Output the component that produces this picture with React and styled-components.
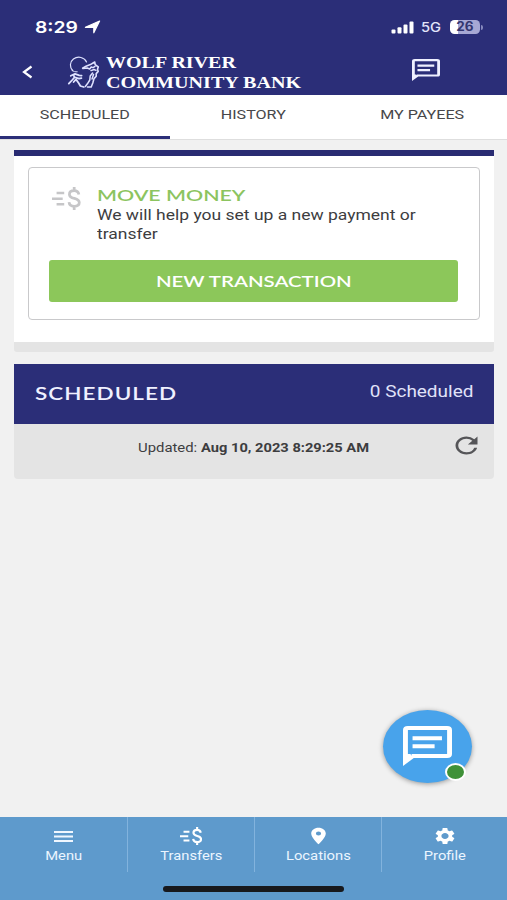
import React from 'react';
import styled, { createGlobalStyle } from 'styled-components';
import { MdLocationOn, MdRefresh, MdSettings } from 'react-icons/md';

const GlobalStyle = createGlobalStyle`
  *, *::before, *::after { box-sizing: border-box; }
  body { margin: 0; background: #f1f1f1; }
  svg { display: block; flex: none; }
`;

const Screen = styled.div`
  display: flex;
  flex-direction: column;
  height: 900px;
  overflow: hidden;
  background: #f1f1f1;
  color: #3d3d3f;
  font-family: Roboto, sans-serif;
`;

/* Text set in extended proportions. */
const Wide = styled.span`
  display: inline-block;
  white-space: nowrap;
  transform: scaleX(${(p) => p.$x});
  transform-origin: ${(p) => p.$from || 'center'};
`;

const SizedIcon = styled.span`
  svg {
    width: ${(p) => p.$w}px;
    height: ${(p) => p.$h}px;
  }
`;

const Header = styled.header`
  height: 95px;
  flex: none;
  background: #2b2e78;
  color: #fff;
`;

const StatusBar = styled.div`
  display: flex;
  align-items: center;
  justify-content: space-between;
  height: 54px;
  padding: 0 24px 0 35px;
`;

const StatusGroup = styled.div`
  display: flex;
  align-items: center;
`;

const Clock = styled.div`
  width: 49px;
  font: 600 16.5px/20px Inter, sans-serif;
`;

const Network = styled.div`
  width: 29px;
  margin-left: 7px;
  font: 500 13px/16px Inter, sans-serif;
  color: #e3e4fa;
`;

const Battery = styled.div`
  display: flex;
  align-items: center;
  justify-content: center;
  width: 30px;
  height: 14px;
  border-radius: 4.5px;
  background: linear-gradient(to right, #fff 8px, #a7a8d4 8px);
  color: #34366f;
  font: 700 12.5px/14px Inter, sans-serif;
`;

const BatteryTip = styled.div`
  width: 2px;
  height: 5px;
  margin-left: 1px;
  border-radius: 0 2px 2px 0;
  background: #8688bd;
`;

const BrandBar = styled.div`
  display: flex;
  height: 41px;
`;

const BackSlot = styled.div`
  width: 67px;
  padding: 11px 0 0 22px;
`;

const WolfSlot = styled.div`
  width: 39px;
  padding-top: 1px;
`;

const BankName = styled.div`
  width: 306px;
  font: 700 17px/20px "Liberation Serif", serif;
`;

const ChatSlot = styled.div`
  padding-top: 5px;
  color: #eff0ff;
`;

const NameLine = styled.div`
  height: 19.5px;
  margin-top: ${(p) => p.$top || 0}px;
`;

const Tabs = styled.nav`
  display: grid;
  grid-template-columns: 170px 167.5px 1fr;
  flex: none;
  height: 45px;
  background: #fff;
  border-bottom: 1px solid #dedede;
`;

const Tab = styled.div`
  padding-top: 10px;
  border-bottom: 3px solid ${(p) => (p.$active ? '#2b2e78' : 'transparent')};
  text-align: center;
  font-size: 13.5px;
  line-height: 19px;
  color: #47474a;
`;

const Main = styled.main`
  flex: 1;
  padding: 10px 13px 0 14px;
`;

const MoneyCard = styled.section`
  height: 202px;
  padding: 11px 14px 0;
  background: #fff;
  border-top: 6px solid #292b72;
  border-bottom: 10px solid #e4e4e4;
  border-radius: 0 0 3px 3px;
`;

const MoneyBox = styled.div`
  height: 153px;
  padding: 17px 20px 0;
  border: 1.5px solid #c9c9cb;
  border-radius: 4px;
`;

const MoneyIntro = styled.div`
  display: flex;
  height: 75px;
`;

const MoneyIconSlot = styled.div`
  width: 48px;
  padding: 2px 0 0 3px;
`;

const MoneyTitle = styled.div`
  height: 21px;
  font: 600 16px/20px Lato, sans-serif;
  color: #8cc45f;
`;

const MoneyText = styled.div`
  font-size: 15px;
  line-height: 19px;
`;

const NewButton = styled.button`
  display: block;
  width: 409px;
  height: 42px;
  padding: 0;
  border: 0;
  border-radius: 3px;
  background: #8cc75a;
  color: #fff;
  font: 600 16px/42px Lato, sans-serif;
`;

const Scheduled = styled.section`
  margin-top: 12px;
  border-radius: 0 0 4px 4px;
  overflow: hidden;
`;

const ScheduledHead = styled.div`
  display: flex;
  justify-content: space-between;
  height: 60px;
  padding: 0 20.5px;
  background: #2b2e78;
  color: #f0f1ff;
`;

const ScheduledTitle = styled.div`
  font: 600 17.5px/59px Lato, sans-serif;
  letter-spacing: 0.8px;
`;

const ScheduledCount = styled.div`
  font-size: 16px;
  line-height: 55px;
  color: #e1e3fa;
`;

const Updated = styled.div`
  display: grid;
  grid-template-columns: 124px 63px 1fr 39px;
  height: 55px;
  padding-top: 7px;
  background: #e4e4e4;
  font-size: 12.5px;
  line-height: 33px;
`;

const UpdatedTime = styled.span`
  font-weight: 700;
`;

const RefreshSlot = styled.div`
  padding-top: 1px;
  margin-left: -5px;
  color: #555558;
`;

const ChatButton = styled.button`
  position: absolute;
  left: 383px;
  top: 710px;
  display: flex;
  align-items: flex-start;
  width: 89px;
  height: 73px;
  padding: 16px 0 0 20px;
  border: 0;
  border-radius: 50%;
  background: #48a3eb;
  color: #fff;
  box-shadow: 0 1px 5px rgba(0, 0, 0, 0.38);
`;

const OnlineDot = styled.span`
  position: absolute;
  left: 62px;
  top: 53px;
  width: 21px;
  height: 18px;
  border: 2px solid #fff;
  border-radius: 50%;
  background: #3f9138;
`;

const BottomBar = styled.footer`
  flex: none;
  height: 83px;
  background: #5e9acc;
  color: #fff;
`;

const NavRow = styled.nav`
  display: grid;
  grid-template-columns: 128px 127px 127px 125px;
  height: 55px;
`;

const NavItem = styled.div`
  display: flex;
  flex-direction: column;
  align-items: center;
  border-right: ${(p) => (p.$last ? 0 : 1)}px solid #82b3dd;
  font-size: 12.5px;
  line-height: 19px;
  color: #ebf5ff;
`;

const NavIcon = styled.div`
  display: flex;
  align-items: center;
  height: 29px;
  padding-top: 9px;
  color: #fff;
`;

const HomeIndicator = styled.div`
  width: 181px;
  height: 6px;
  margin: 14px auto 0;
  border-radius: 3px;
  background: #17191d;
`;

function ChatIcon({ width, height }) {
  return (
    <svg width={width} height={height} viewBox="0 0 20 20" preserveAspectRatio="none" fill="none" stroke="currentColor">
      <path d="M1 16V2Q1 1 2 1H18Q19 1 19 2V14Q19 15 18 15H3.5" strokeWidth="2" />
      <path d="M0 14V20L4.4 16L3 14Z" fill="currentColor" stroke="none" />
      <path d="M3.9 6.1H15.9M3.9 10.1H12.9" strokeWidth="2" />
    </svg>
  );
}

function MoneyIcon({ width, height, color = 'currentColor' }) {
  return (
    <svg width={width} height={height} viewBox="0 0 28 23" preserveAspectRatio="none" fill="none" stroke={color}>
      <path d="M4.5 6H12M0 11.8H10.5M4.5 17.3H12" strokeWidth="2.6" />
      <path d="M26.4 7.4C25.9 4.8 24.1 3.7 21.8 3.7C19 3.7 17.1 5 17.1 7.4C17.1 9.9 19.4 10.7 22 11.4C25 12.2 26.8 13.3 26.8 15.6C26.8 18 24.9 19.3 21.9 19.3C18.9 19.3 17 18 16.7 15.2M21.8 0V4M21.8 19V23" strokeWidth="2.7" />
    </svg>
  );
}

function WolfLogo() {
  return (
    <svg width="34" height="36" viewBox="0 0 34 36" fill="none" stroke="#dfe2ff" strokeLinecap="round" strokeLinejoin="round">
      <path d="M5.7 15.5C2.6 12.5 2.5 7 6.4 4C11 0.8 17.5 2.1 19.5 7" strokeWidth="1.2" />
      <path d="M4.8 15.2C6.7 16.7 8.4 17 10.2 16.8" strokeWidth="1" />
      <path d="M15.6 13.2L19 11.2L23.4 9.6L27.7 7L28.2 9.6L31.3 12L30.5 14.3L31.2 16.4L29.2 18.6L29.2 21.2L27 23.6L25.8 28L24.2 32H20.5" strokeWidth="1.6" />
      <path d="M16 13.6L20.2 13L22.7 14L24.2 12L26 12.6L28 11.3M24 15.6L27 14.5L29 15.4M25.6 18L23.2 21L22.8 25L20.4 28.8L18.3 31.5M26.5 19.5L25 24" strokeWidth="1.5" />
      <path d="M3.8 20.8L8 18.9L12.2 20.3L14.6 20.6M7 21L7.4 22.5L5.2 25L1.8 28.6M8.5 22.5L12 23.6L14.4 23.2M9 24.4L11.6 28L13.4 31L16.8 32M9 24.4L6.6 27" strokeWidth="1.8" />
    </svg>
  );
}

function MenuIcon() {
  return (
    <svg width="19" height="13" viewBox="0 0 19 13" fill="#f0f7ff">
      <path d="M0 1H19V3H0ZM0 5.5H19V7.5H0ZM0 10H19V12H0Z" />
    </svg>
  );
}

const navItems = [
  { label: 'Menu', x: 1.18, icon: <MenuIcon /> },
  { label: 'Transfers', x: 1.177, icon: <MoneyIcon width={22} height={18} /> },
  {
    label: 'Locations',
    x: 1.186,
    icon: <SizedIcon $w={25} $h={20}><MdLocationOn preserveAspectRatio="none" /></SizedIcon>,
  },
  {
    label: 'Profile',
    x: 1.18,
    icon: <SizedIcon $w={24} $h={20}><MdSettings preserveAspectRatio="none" /></SizedIcon>,
  },
];

export default function App() {
  return (
    <Screen>
      <GlobalStyle />
      <Header>
        <StatusBar>
          <StatusGroup>
            <Clock><Wide $x={1.17} $from="left">8:29</Wide></Clock>
            <svg width="17" height="14" viewBox="0 0 17 14" fill="#fff" stroke="#fff" strokeLinejoin="round">
              <path d="M15.6 1L9.8 12.8V7.3H1.4Z" strokeWidth="1.2" />
            </svg>
          </StatusGroup>
          <StatusGroup>
            <svg width="23" height="13" viewBox="0 0 23 13" fill="#fff">
              <rect x="0.5" y="8.5" width="4" height="4" rx="1" />
              <rect x="6.5" y="6.2" width="4" height="6.3" rx="1" />
              <rect x="12.5" y="3.5" width="4" height="9" rx="1" />
              <rect x="18.5" y="0.5" width="4" height="12" rx="1" />
            </svg>
            <Network><Wide $x={1.13} $from="left">5G</Wide></Network>
            <Battery><Wide $x={1.08}>26</Wide></Battery>
            <BatteryTip />
          </StatusGroup>
        </StatusBar>
        <BrandBar>
          <BackSlot>
            <svg width="11" height="14" viewBox="0 0 11 14" fill="none" stroke="#fff" strokeWidth="2.2">
              <path d="M9.5 1.5L2 7L9.5 12.5" />
            </svg>
          </BackSlot>
          <WolfSlot><WolfLogo /></WolfSlot>
          <BankName>
            <NameLine $top={-1}><Wide $x={1.177} $from="left">WOLF RIVER</Wide></NameLine>
            <NameLine><Wide $x={1.182} $from="left">COMMUNITY BANK</Wide></NameLine>
          </BankName>
          <ChatSlot><ChatIcon width={28} height={22} /></ChatSlot>
        </BrandBar>
      </Header>

      <Tabs>
        <Tab $active><Wide $x={1.192}>SCHEDULED</Wide></Tab>
        <Tab><Wide $x={1.192}>HISTORY</Wide></Tab>
        <Tab><Wide $x={1.195}>MY PAYEES</Wide></Tab>
      </Tabs>

      <Main>
        <MoneyCard>
          <MoneyBox>
            <MoneyIntro>
              <MoneyIconSlot><MoneyIcon width={28.5} height={23} color="#c6c6c8" /></MoneyIconSlot>
              <div>
                <MoneyTitle><Wide $x={1.334} $from="left">MOVE MONEY</Wide></MoneyTitle>
                <MoneyText>
                  <Wide $x={1.166} $from="left">We will help you set up a new payment or<br />transfer</Wide>
                </MoneyText>
              </div>
            </MoneyIntro>
            <NewButton><Wide $x={1.275}>NEW TRANSACTION</Wide></NewButton>
          </MoneyBox>
        </MoneyCard>

        <Scheduled>
          <ScheduledHead>
            <ScheduledTitle><Wide $x={1.285} $from="left">SCHEDULED</Wide></ScheduledTitle>
            <ScheduledCount><Wide $x={1.185} $from="right">0 Scheduled</Wide></ScheduledCount>
          </ScheduledHead>
          <Updated>
            <span />
            <Wide $x={1.19} $from="left">Updated:</Wide>
            <UpdatedTime><Wide $x={1.173} $from="left">Aug 10, 2023 8:29:25 AM</Wide></UpdatedTime>
            <RefreshSlot>
              <SizedIcon $w={33} $h={27}><MdRefresh preserveAspectRatio="none" /></SizedIcon>
            </RefreshSlot>
          </Updated>
        </Scheduled>
      </Main>

      <ChatButton aria-label="Chat">
        <ChatIcon width={49} height={40} />
        <OnlineDot />
      </ChatButton>

      <BottomBar>
        <NavRow>
          {navItems.map((item, i) => (
            <NavItem key={item.label} $last={i === navItems.length - 1}>
              <NavIcon>{item.icon}</NavIcon>
              <Wide $x={item.x}>{item.label}</Wide>
            </NavItem>
          ))}
        </NavRow>
        <HomeIndicator />
      </BottomBar>
    </Screen>
  );
}
